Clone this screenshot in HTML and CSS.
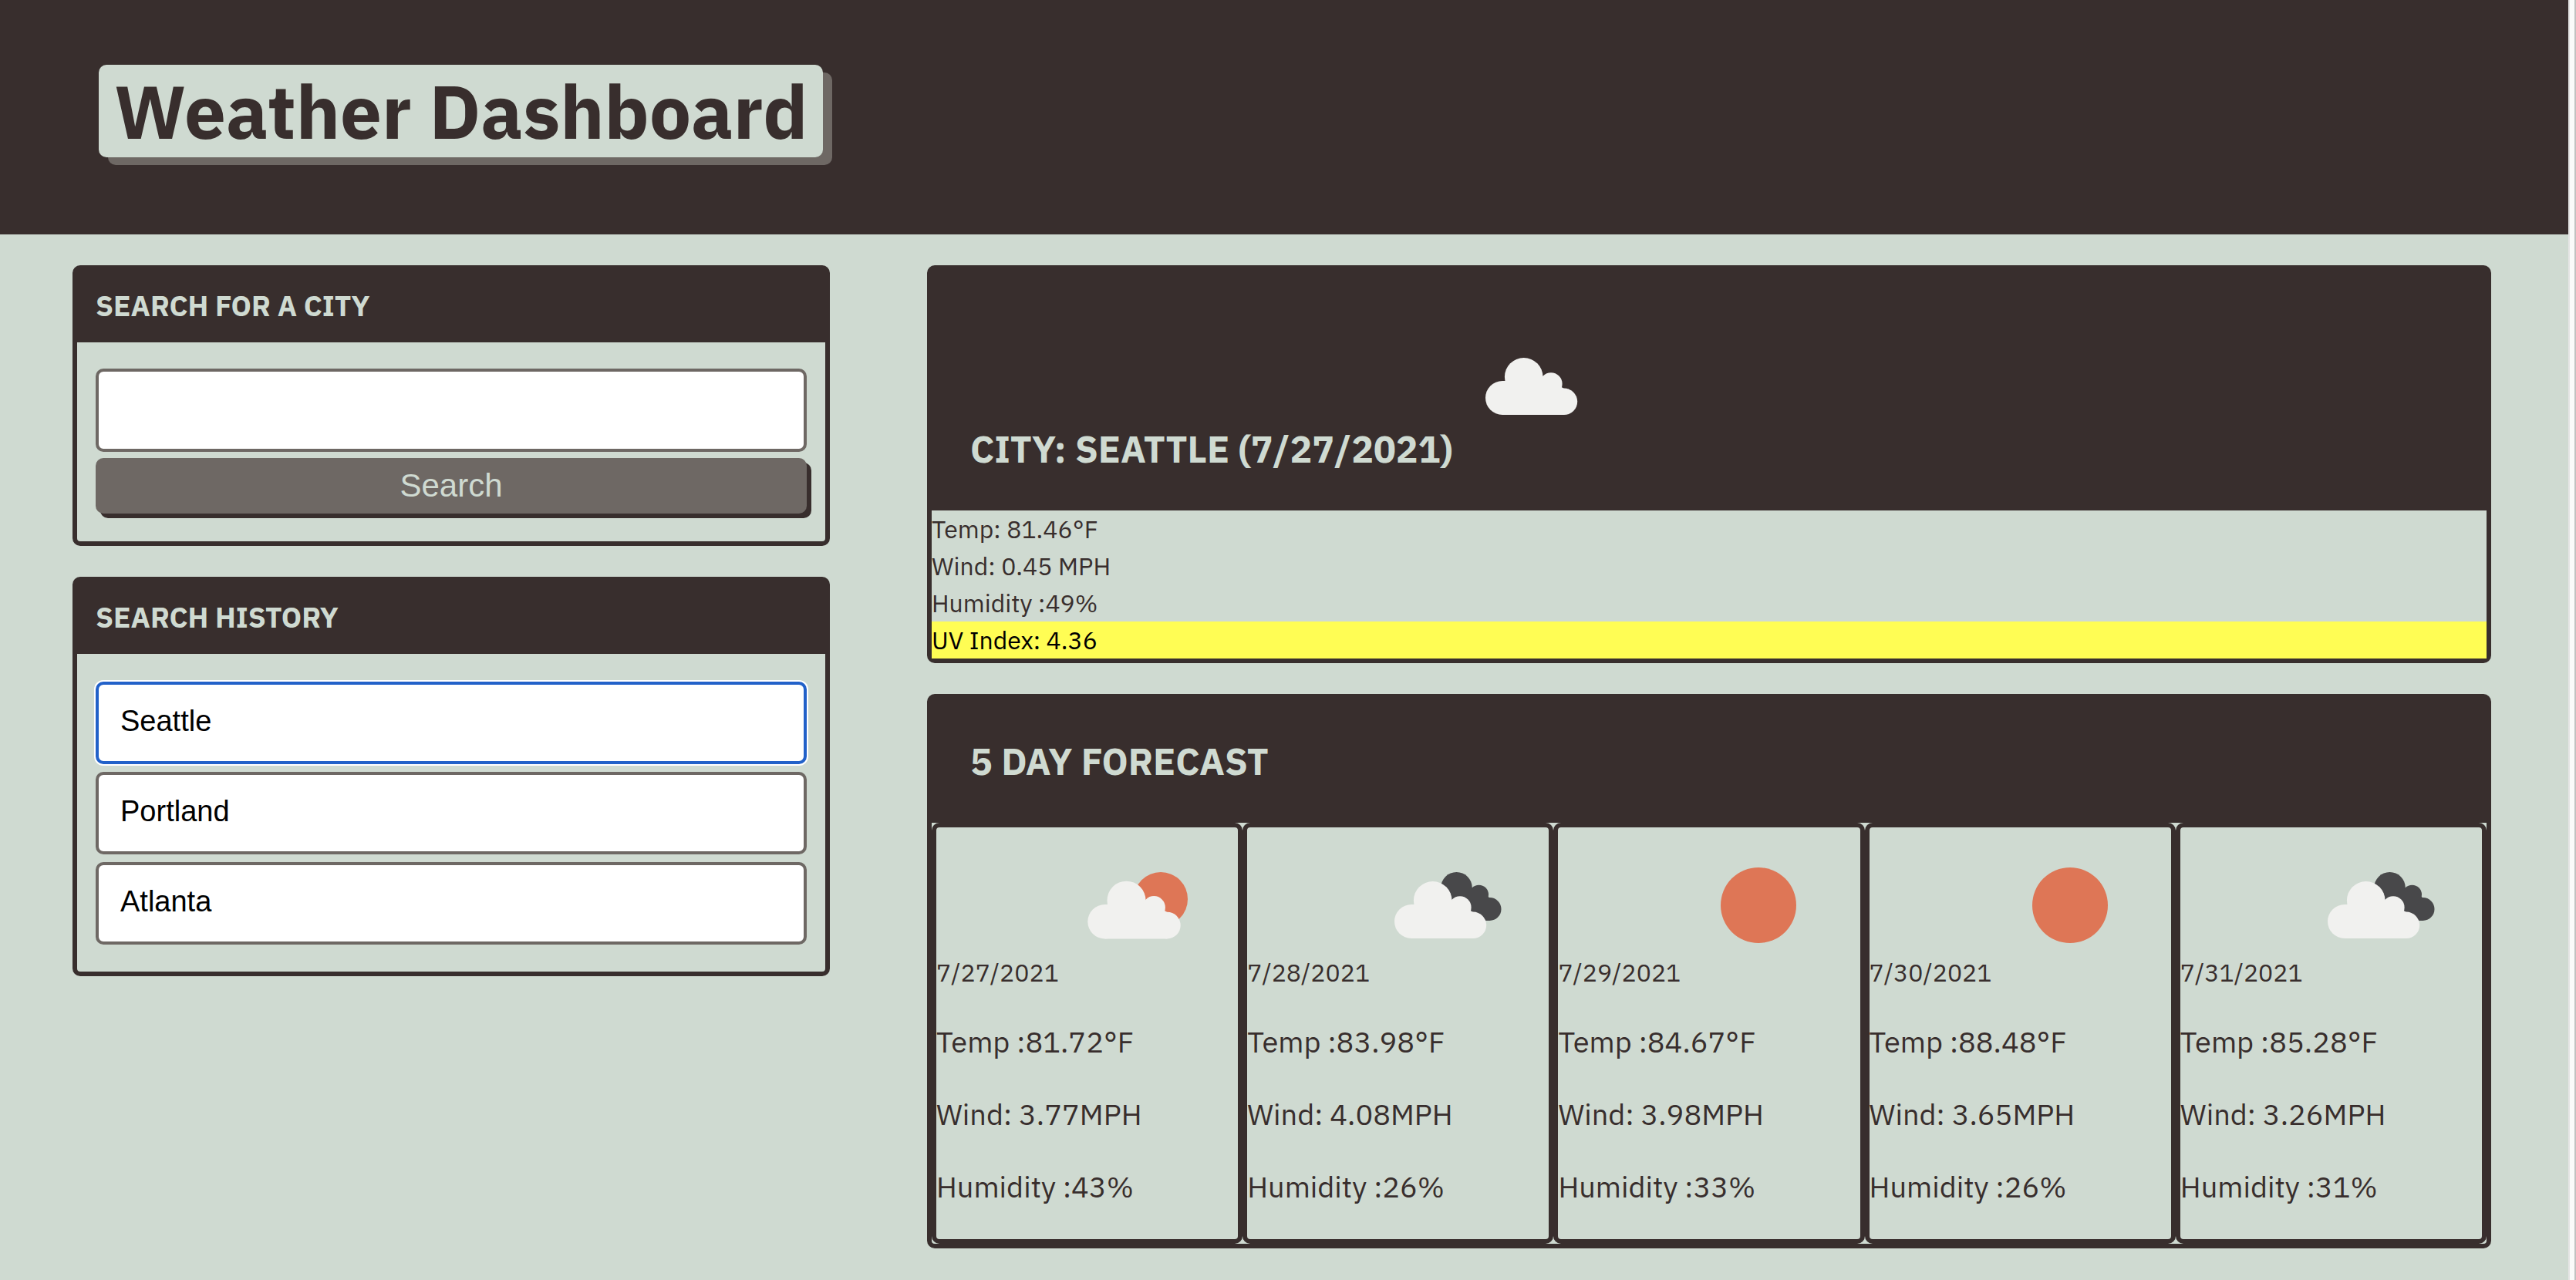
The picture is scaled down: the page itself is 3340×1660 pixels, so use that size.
FILE: index.html
```html
<!DOCTYPE html>
<html lang="en">
<head>
  <meta charset="utf-8">
  <meta name="viewport" content="width=device-width, initial-scale=1">
  <title>Weather Dashboard</title>
  <link rel="stylesheet" href="styles.css">
</head>
<body>
  <svg class="sprite" aria-hidden="true">
    <symbol id="cloud" viewBox="0 0 200 200">
      <circle cx="54" cy="122" r="22"/>
      <circle cx="81.7" cy="94.8" r="24.8"/>
      <circle cx="117" cy="103.8" r="14.6"/>
      <circle cx="134" cy="126.8" r="17.2"/>
      <path d="M54 100H117L134 110V144H54Z"/>
    </symbol>
    <symbol id="icon-cloudy" viewBox="0 0 200 200">
      <use href="#cloud" x="10" y="-6" width="200" height="200" fill="#f1f1ef"/>
    </symbol>
    <symbol id="icon-partly" viewBox="0 0 200 200">
      <circle cx="132" cy="93" r="35" fill="#de7656"/>
      <use href="#cloud" x="5" y="-1" width="202" height="202" fill="#f1f1ef"/>
    </symbol>
    <symbol id="icon-broken" viewBox="0 0 200 200">
      <g fill="#48484a">
        <circle cx="112.5" cy="78.3" r="20.3"/>
        <circle cx="141.5" cy="87.2" r="12.5"/>
        <circle cx="155.5" cy="106" r="15"/>
        <path d="M112 80H142L156 92V121H112Z"/>
      </g>
      <use href="#cloud" width="200" height="200" fill="#f1f1ef"/>
    </symbol>
    <symbol id="icon-clear" viewBox="0 0 200 200">
      <circle cx="101" cy="101" r="49" fill="#de7656"/>
    </symbol>
  </svg>

  <div class="page">
    <header class="site-header">
      <h1 class="site-title">Weather Dashboard</h1>
    </header>

    <div class="columns">
      <aside class="sidebar">
        <section class="panel">
          <h3 class="panel-heading"><label for="city">SEARCH FOR A CITY</label></h3>
          <form class="search-form">
            <input class="field" id="city" type="text">
            <button class="search-button" type="button">Search</button>
          </form>
        </section>

        <section class="panel">
          <h3 class="panel-heading">SEARCH HISTORY</h3>
          <div class="history">
            <button class="field history-item history-item-active" type="button">Seattle</button>
            <button class="field history-item" type="button">Portland</button>
            <button class="field history-item" type="button">Atlanta</button>
          </div>
        </section>
      </aside>

      <main class="content">
        <section class="panel">
          <h2 class="banner">CITY: SEATTLE (7/27/2021)<svg class="weather-icon" role="img" aria-label="Cloudy"><use href="#icon-cloudy"/></svg></h2>
          <div class="reading">Temp: 81.46°F</div>
          <div class="reading">Wind: 0.45 MPH</div>
          <div class="reading">Humidity :49%</div>
          <div class="reading reading-uv">UV Index: 4.36</div>
        </section>

        <section class="panel">
          <h2 class="banner">5 DAY FORECAST</h2>
          <div class="forecast">
            <article class="day">
              <div class="day-top"><time datetime="2021-07-27">7/27/2021</time><svg class="weather-icon" role="img" aria-label="Partly cloudy"><use href="#icon-partly"/></svg></div>
              <div class="day-readings"><p>Temp :81.72°F</p><p>Wind: 3.77MPH</p><p>Humidity :43%</p></div>
            </article>
            <article class="day">
              <div class="day-top"><time datetime="2021-07-28">7/28/2021</time><svg class="weather-icon" role="img" aria-label="Broken clouds"><use href="#icon-broken"/></svg></div>
              <div class="day-readings"><p>Temp :83.98°F</p><p>Wind: 4.08MPH</p><p>Humidity :26%</p></div>
            </article>
            <article class="day">
              <div class="day-top"><time datetime="2021-07-29">7/29/2021</time><svg class="weather-icon" role="img" aria-label="Clear"><use href="#icon-clear"/></svg></div>
              <div class="day-readings"><p>Temp :84.67°F</p><p>Wind: 3.98MPH</p><p>Humidity :33%</p></div>
            </article>
            <article class="day">
              <div class="day-top"><time datetime="2021-07-30">7/30/2021</time><svg class="weather-icon" role="img" aria-label="Clear"><use href="#icon-clear"/></svg></div>
              <div class="day-readings"><p>Temp :88.48°F</p><p>Wind: 3.65MPH</p><p>Humidity :26%</p></div>
            </article>
            <article class="day">
              <div class="day-top"><time datetime="2021-07-31">7/31/2021</time><svg class="weather-icon" role="img" aria-label="Broken clouds"><use href="#icon-broken"/></svg></div>
              <div class="day-readings"><p>Temp :85.28°F</p><p>Wind: 3.26MPH</p><p>Humidity :31%</p></div>
            </article>
          </div>
        </section>
      </main>
    </div>
  </div>
  <div class="window-edge"></div>
</body>
</html>
```
FILE: styles.css
```css
:root {
  --dark: #382e2d;
  --light: #cfdad1;
  --gray: #6e6864;
}

* {
  box-sizing: border-box;
  margin: 0;
  padding: 0;
}

body {
  display: flex;
  min-height: 100vh;
  background: var(--light);
  color: var(--dark);
  font-family: "IBM Plex Sans", Roboto, sans-serif;
  font-size: 32px;
  line-height: 48px;
}

.sprite {
  display: none;
}

.page {
  flex: 1;
  min-width: 0;
  padding-bottom: 40px;
}

/* Strip down the right side of the window */
.window-edge {
  width: 10px;
  border-left: 2px solid #e6e6e6;
  border-right: 2px solid #c1c1c1;
  background: #fafafa;
}

.site-header {
  display: flex;
  padding: 84px 128px 100px;
  background: var(--dark);
}

.site-title {
  padding: 0 20px;
  border-radius: 10px;
  background: var(--light);
  box-shadow: 12px 10px 0 var(--gray);
  font-size: 96px;
  font-weight: 700;
  line-height: 120px;
}

.columns {
  display: flex;
  gap: 126px;
  align-items: flex-start;
  padding: 40px 100px 0 94px;
}

.sidebar,
.content {
  display: flex;
  flex-direction: column;
  gap: 40px;
  min-width: 0;
}

.sidebar {
  flex: 982 1 0;
}

.content {
  flex: 2028 1 0;
}

.panel {
  border: 6px solid var(--dark);
  border-radius: 10px;
}

.panel-heading {
  padding: 22px 24px 24px;
  background: var(--dark);
  color: var(--light);
  font-size: 37px;
  font-weight: 700;
  line-height: 48px;
}

.search-form {
  display: flex;
  flex-direction: column;
  gap: 8px;
  padding: 34px 24px 36px;
}

.field {
  width: 100%;
  height: 108px;
  padding: 0 28px 4px;
  border: 4px solid var(--gray);
  border-radius: 10px;
  background: #fff;
  color: #000;
  font-family: "Liberation Sans", Arial, sans-serif;
  font-size: 38px;
  text-align: left;
}

.search-button {
  height: 72px;
  border: 0;
  border-radius: 10px;
  background: var(--gray);
  box-shadow: 6px 6px 0 var(--dark);
  color: var(--light);
  font-family: "Liberation Sans", Arial, sans-serif;
  font-size: 42px;
}

.history {
  display: flex;
  flex-direction: column;
  gap: 10px;
  padding: 36px 24px 35px;
}

.history-item {
  height: 107px;
}

.history-item-active {
  border-color: #2261c9;
  box-shadow: 0 0 0 2px #fff;
}

.banner {
  padding: 50px 50px 49px;
  background: var(--dark);
  color: var(--light);
  font-size: 48px;
  font-weight: 700;
  line-height: 62px;
}

.weather-icon {
  width: 200px;
  height: 200px;
}

.reading-uv {
  background: #fffd54;
  color: #000;
}

.forecast {
  display: flex;
}

.day {
  flex: 1;
  min-width: 0;
  border: 6px solid var(--dark);
  border-radius: 10px;
}

.day-readings {
  display: flex;
  flex-direction: column;
  gap: 38px;
  padding: 38px 0 40px;
  font-size: 38px;
  line-height: 56px;
}
```
